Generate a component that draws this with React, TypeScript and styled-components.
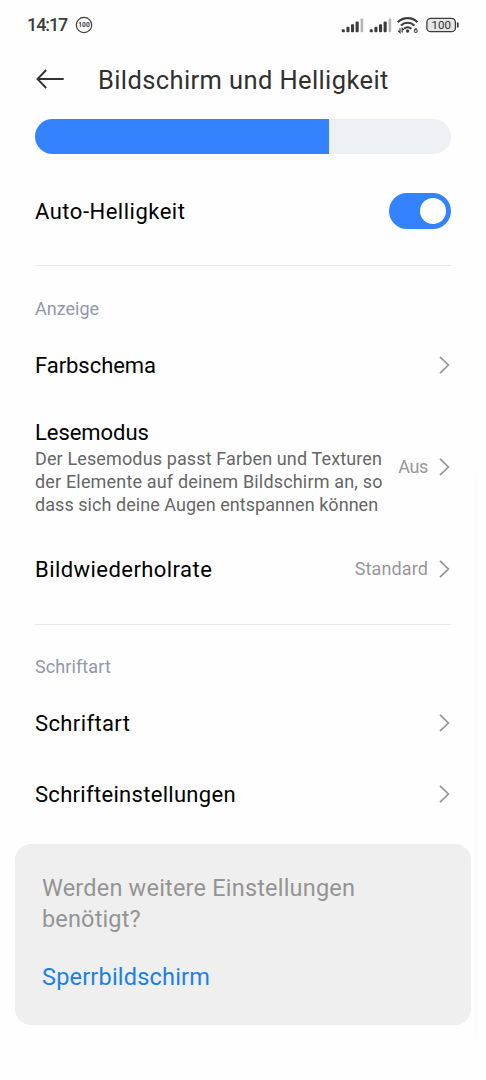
import React from 'react';
import styled, { createGlobalStyle } from 'styled-components';

const GlobalStyle = createGlobalStyle`
  * { box-sizing: border-box; }
  body { margin: 0; background: #fefefe; }
`;

const Screen = styled.main`
  position: relative;
  width: 486px;
  height: 1080px;
  overflow: hidden;
  background: #fefefe;
  color: #000;
  font-family: Roboto, 'Liberation Sans', sans-serif;
`;

const StatusBar = styled.div`
  display: flex;
  align-items: center;
  justify-content: space-between;
  height: 50px;
  padding: 0 26px 0 27px;
`;

const StatusGroup = styled.div`
  display: flex;
  align-items: center;
`;

const Clock = styled.time`
  width: 41px;
  margin-right: 7px;
  color: #3c3c3c;
  font-size: 18px;
  font-weight: 500;
  line-height: 20px;
  letter-spacing: -1.1px;
  white-space: nowrap;
`;

const Header = styled.header`
  display: flex;
  align-items: center;
  height: 60px;
  padding-left: 36px;
`;

const BackButton = styled.button`
  display: flex;
  width: 28px;
  height: 28px;
  margin-right: 34px;
  padding: 3px 0 0;
  border: 0;
  background: none;
`;

const Title = styled.h1`
  margin: 0;
  color: #303030;
  font-size: 25.5px;
  font-weight: 400;
  line-height: 34px;
  letter-spacing: 0.39px;
  white-space: nowrap;
`;

const Content = styled.div`
  padding: 9px 35px 0;
`;

const Slider = styled.div`
  height: 35px;
  border-radius: 18px;
  background: #edf0f5;
  overflow: hidden;
`;

const SliderFill = styled.div`
  height: 100%;
  background: #3582ff;
`;

const Section = styled.section<{ $top: number; $bottom?: number }>`
  padding-top: ${(p) => p.$top}px;
  padding-bottom: ${(p) => p.$bottom ?? 19}px;
  & + & { border-top: 1px solid #e9e9e9; }
`;

const SectionLabel = styled.h2<{ $spacing: number }>`
  margin: 0 0 9px;
  color: #9297ab;
  font-size: 18px;
  font-weight: 400;
  line-height: 23px;
  letter-spacing: ${(p) => p.$spacing}px;
`;

const Row = styled.div<{ $height?: number }>`
  display: flex;
  align-items: center;
  justify-content: space-between;
  height: ${(p) => p.$height ?? 71}px;
`;

const RowTitle = styled.div<{ $spacing: number }>`
  height: 30px;
  font-size: 22px;
  line-height: 32px;
  letter-spacing: ${(p) => p.$spacing}px;
  white-space: nowrap;
`;

const Summary = styled.div`
  color: #666;
  font-size: 18px;
  line-height: 23px;
  white-space: nowrap;
`;

const SummaryLine = styled.span<{ $spacing: number }>`
  display: block;
  letter-spacing: ${(p) => p.$spacing}px;
`;

const RowEnd = styled.div`
  display: flex;
  align-items: center;
  gap: 11px;
  padding-right: 1px;
`;

const RowValue = styled.span<{ $spacing: number }>`
  color: #979797;
  font-size: 18px;
  line-height: 24px;
  letter-spacing: ${(p) => p.$spacing}px;
`;

const Switch = styled.button`
  display: flex;
  align-items: center;
  justify-content: flex-end;
  width: 62px;
  height: 36px;
  padding: 0 5px 0 0;
  border: 0;
  border-radius: 18px;
  background: #3582ff;
`;

const Knob = styled.span`
  width: 26px;
  height: 26px;
  border-radius: 50%;
  background: #fff;
`;

const Card = styled.aside`
  width: 455.5px;
  height: 180.5px;
  margin: -4px 0 0 15px;
  padding: 29px 27px;
  border-radius: 16px;
  background: #efefef;
`;

const CardText = styled.p`
  margin: 0 0 27px;
  color: #949494;
  font-size: 23.5px;
  line-height: 30.5px;
`;

const CardLine = styled.span<{ $spacing: number }>`
  display: block;
  letter-spacing: ${(p) => p.$spacing}px;
`;

const CardLink = styled.a`
  color: #1a80e8;
  font-size: 23.5px;
  line-height: 32px;
  letter-spacing: 0.2px;
`;

const ScrollTrack = styled.div`
  position: absolute;
  top: 474px;
  right: 9px;
  width: 3px;
  height: 565px;
  background: #fcfcfc;
`;

const WifiSlot = styled.span`
  display: flex;
  margin-right: 7px;
`;

const DndBadge = () => (
  <svg width="18" height="18" viewBox="0 0 18 18">
    <circle cx="9" cy="9" r="7.7" fill="none" stroke="#3c3c3c" strokeWidth="1.2" />
    <text x="9" y="11.4" textAnchor="middle" fontSize="6.6" fontWeight="700" fill="#3c3c3c">100</text>
  </svg>
);

const Signal = () => (
  <svg width="28" height="16" viewBox="0 0 28 16">
    {[[0.7, 12.2], [5.4, 9.8], [10, 7.3], [14.6, 4.6]].map(([x, y]) => (
      <rect key={x} x={x} y={y} width="3.1" height={15.2 - y} rx="0.9" fill="#3c3c3c" />
    ))}
    <rect x="19.6" y="1.4" width="2.6" height="13.8" rx="0.9" fill="#b5b5b5" />
  </svg>
);

const Wifi = () => (
  <svg width="22" height="18" viewBox="0 0 22 18">
    <g fill="none" stroke="#3c3c3c" strokeWidth="2.2">
      <path d="M.8 6.2C6.3.8 15 .8 20.500 6.200" />
      <path d="M3.900 9.500C7.700 5.800 13.600 5.800 17.400 9.500" />
      <path d="M7 12.700C9.100 10.800 12.200 10.800 14.300 12.700" />
    </g>
    <circle cx="10.600" cy="15" r="1.700" fill="#3c3c3c" />
    <path d="M3 12.300v4.200L1.200 14.800M5.200 16.600v-4.200l1.700 1.500" fill="none" stroke="#3c3c3c" strokeWidth="1.200" />
    <text x="16.400" y="17" fontSize="7.500" fontWeight="700" fill="#3c3c3c">6</text>
  </svg>
);

const Battery = () => (
  <svg width="34" height="16" viewBox="0 0 34 16">
    <rect x="0.9" y="1.300" width="28.500" height="13.400" rx="3.800" fill="#e6e6e6" stroke="#3c3c3c" strokeWidth="1.300" />
    <path d="M31.800 6.200v3.600" stroke="#3c3c3c" strokeWidth="1.700" strokeLinecap="round" />
    <text x="15.200" y="12.100" textAnchor="middle" fontSize="11.500" fill="#303030">100</text>
  </svg>
);

const BackArrow = () => (
  <svg width="28" height="20" viewBox="0 0 28 20">
    <path d="M27.700 10H1.500M10.200 1 1.500 10l8.700 9" fill="none" stroke="#333" strokeWidth="1.900" />
  </svg>
);

const Chevron = () => (
  <svg width="11" height="18" viewBox="0 0 11 18">
    <path d="M1 .8 9.400 9 1 17.200" fill="none" stroke="#959595" strokeWidth="1.700" />
  </svg>
);

interface SettingProps {
  title: string;
  spacing: number;
  value?: string;
  valueSpacing?: number;
}

const Setting = ({ title, spacing, value, valueSpacing = 0 }: SettingProps) => (
  <Row>
    <RowTitle $spacing={spacing}>{title}</RowTitle>
    <RowEnd>
      {value && <RowValue $spacing={valueSpacing}>{value}</RowValue>}
      <Chevron />
    </RowEnd>
  </Row>
);

export default function App() {
  const brightness = 70.7;
  return (
    <Screen>
      <GlobalStyle />
      <StatusBar>
        <StatusGroup>
          <Clock>14:17</Clock>
          <DndBadge />
        </StatusGroup>
        <StatusGroup>
          <Signal />
          <Signal />
          <WifiSlot><Wifi /></WifiSlot>
          <Battery />
        </StatusGroup>
      </StatusBar>
      <Header>
        <BackButton aria-label="Zurück"><BackArrow /></BackButton>
        <Title>Bildschirm und Helligkeit</Title>
      </Header>
      <Content>
        <Slider><SliderFill style={{ width: `${brightness}%` }} /></Slider>
        <Section $top={21}>
          <Row>
            <RowTitle $spacing={0.5}>Auto-Helligkeit</RowTitle>
            <Switch role="switch" aria-checked="true" aria-label="Auto-Helligkeit"><Knob /></Switch>
          </Row>
        </Section>
        <Section $top={31} $bottom={20}>
          <SectionLabel $spacing={0}>Anzeige</SectionLabel>
          <Setting title="Farbschema" spacing={-0.05} />
          <Row $height={133}>
            <div>
              <RowTitle $spacing={-0.05}>Lesemodus</RowTitle>
              <Summary>
                <SummaryLine $spacing={0.13}>Der Lesemodus passt Farben und Texturen</SummaryLine>
                <SummaryLine $spacing={0.17}>der Elemente auf deinem Bildschirm an, so</SummaryLine>
                <SummaryLine $spacing={0.05}>dass sich deine Augen entspannen können</SummaryLine>
              </Summary>
            </div>
            <RowEnd><RowValue $spacing={-0.4}>Aus</RowValue><Chevron /></RowEnd>
          </Row>
          <Setting title="Bildwiederholrate" spacing={0.44} value="Standard" valueSpacing={0.12} />
        </Section>
        <Section $top={30}>
          <SectionLabel $spacing={0.1}>Schriftart</SectionLabel>
          <Setting title="Schriftart" spacing={0.38} />
          <Setting title="Schrifteinstellungen" spacing={0.3} />
        </Section>
      </Content>
      <Card>
        <CardText>
          <CardLine $spacing={0.2}>Werden weitere Einstellungen</CardLine>
          <CardLine $spacing={0.15}>benötigt?</CardLine>
        </CardText>
        <CardLink>Sperrbildschirm</CardLink>
      </Card>
      <ScrollTrack />
    </Screen>
  );
}
